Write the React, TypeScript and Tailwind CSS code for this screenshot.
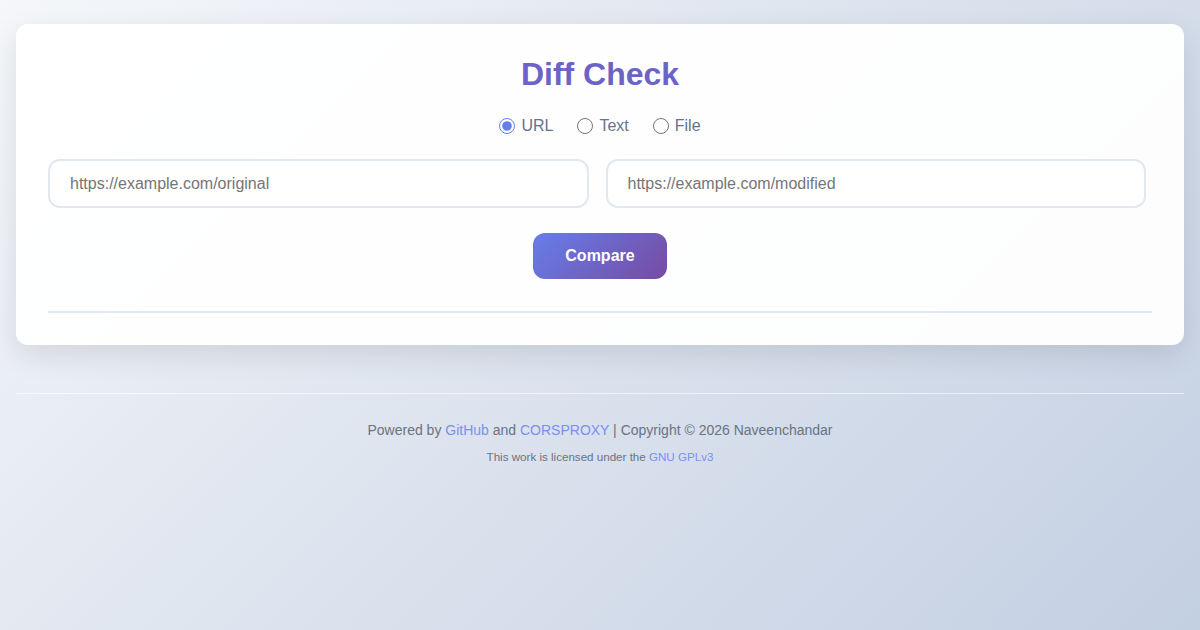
import { useState } from 'react';

const font = { fontFamily: '"Liberation Sans", Arial, sans-serif' };

export default function App() {
  const [mode, setMode] = useState('url');
  const modes = [
    { id: 'url', label: 'URL' },
    { id: 'text', label: 'Text' },
    { id: 'file', label: 'File' },
  ];

  return (
    <div
      style={font}
      className="min-h-[630px] w-full bg-[linear-gradient(135deg,#f5f7fa_0%,#c3cfe2_100%)] px-4 pt-6"
    >
      <div className="rounded-xl bg-white/95 px-8 pt-[31px] pb-8 shadow-[0_10px_30px_rgba(0,0,0,0.1)]">
        <h1 className="text-center text-[32px] leading-[38px] font-bold text-[#6b63c5]">Diff Check</h1>

        <div className="mt-[21px] flex items-center justify-center gap-6">
          {modes.map((m) => (
            <label key={m.id} className="flex cursor-pointer items-center gap-[6px] text-[16px] text-[#64748b]">
              <input
                type="radio"
                name="mode"
                checked={mode === m.id}
                onChange={() => setMode(m.id)}
                className="m-0 h-[16px] w-[16px] accent-[#667eea]"
              />
              {m.label}
            </label>
          ))}
        </div>

        <div className="mt-[21px] flex w-[1098px] gap-[17px]">
          <input
            type="text"
            placeholder="https://example.com/original"
            className="h-[49px] flex-1 rounded-xl border-2 border-[#e2e8f0] bg-white px-5 text-[16px] text-[#333] placeholder:text-[#757575] focus:outline-none"
          />
          <input
            type="text"
            placeholder="https://example.com/modified"
            className="h-[49px] flex-1 rounded-xl border-2 border-[#e2e8f0] bg-white px-5 text-[16px] text-[#333] placeholder:text-[#757575] focus:outline-none"
          />
        </div>

        <div className="mt-[25px] flex justify-center">
          <button className="h-[46px] w-[134px] rounded-xl bg-[linear-gradient(135deg,#667eea_0%,#764ba2_100%)] text-[16px] font-bold text-white">
            Compare
          </button>
        </div>

        <div className="mt-[32px] h-[2px] bg-[#e2e8f0]" />
      </div>

      <footer className="mt-12 border-t border-white/60 pt-[26px] text-center">
        <p className="text-[14px] leading-[20px] text-[#6b7280]">
          Powered by <a className="text-[#7c8ef0]" href="#">GitHub</a> and{' '}
          <a className="text-[#7c8ef0]" href="#">CORSPROXY</a> | Copyright © 2026 Naveenchandar
        </p>
        <p className="mt-[9px] text-[11.6px] leading-[16px] text-[#6b7280]">
          This work is licensed under the <a className="text-[#7c8ef0]" href="#">GNU GPLv3</a>
        </p>
      </footer>
    </div>
  );
}
